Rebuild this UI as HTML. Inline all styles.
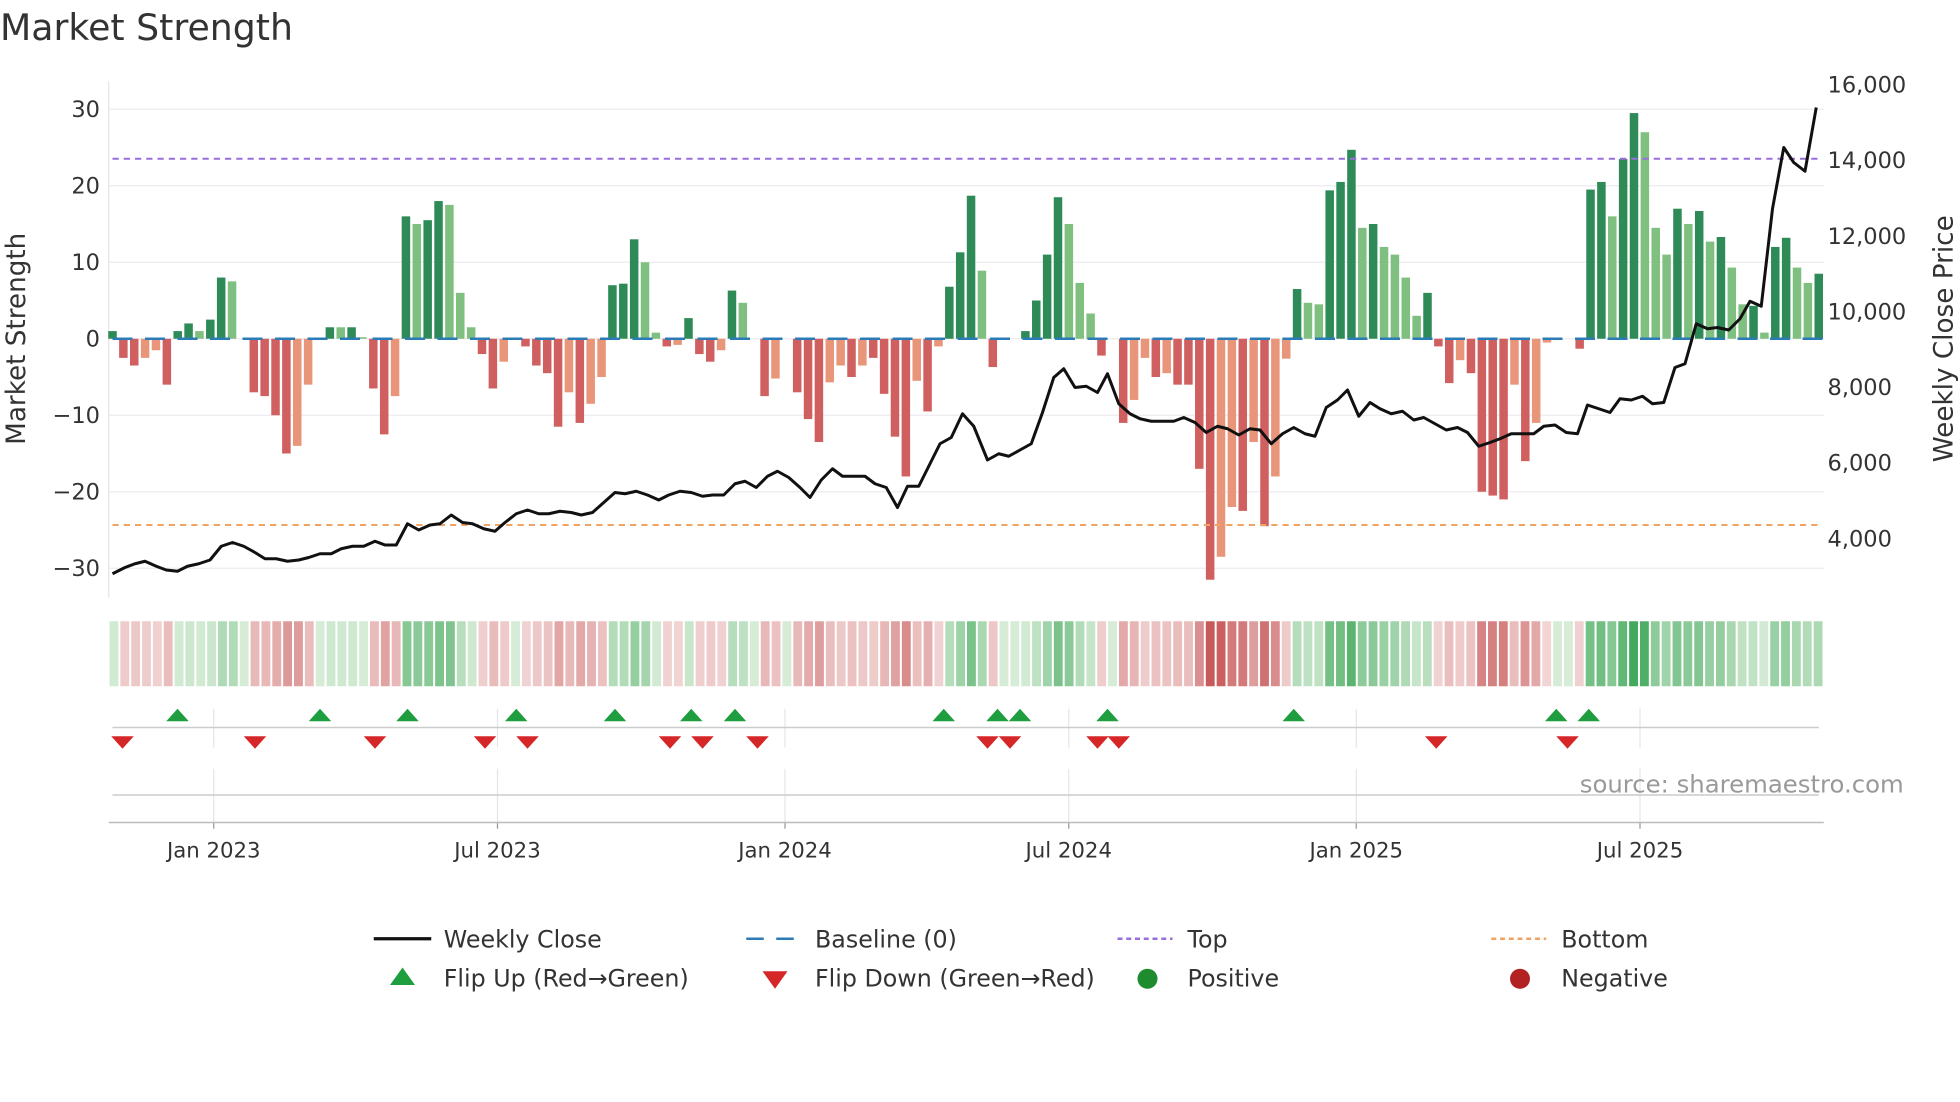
<!DOCTYPE html>
<html><head><meta charset="utf-8"><style>
html,body{margin:0;padding:0;background:#fff;}
svg{display:block;}
text{font-family:"DejaVu Sans","Liberation Sans",sans-serif;fill:#333;}
</style></head><body>
<svg id="s" width="1960" height="1102" viewBox="0 0 1568 881.6" xmlns="http://www.w3.org/2000/svg">
<text x="0" y="32" font-size="29">Market Strength</text>
<g id="grid"></g>
<g id="bars"></g>
<g id="heat"></g>
<g id="rest"></g>
</svg>
<script>
const NS="http://www.w3.org/2000/svg";
function el(p,t,a,txt){const e=document.createElementNS(NS,t);for(const k in a)e.setAttribute(k,a[k]);if(txt!==undefined)e.textContent=txt;document.getElementById(p).appendChild(e);return e;}
const zeroY=271, unit=6.12;
const vy=v=>zeroY-v*unit;
for(let v=-30;v<=30;v+=10){el('grid','line',{x1:87,x2:1459,y1:vy(v),y2:vy(v),stroke:'#ececf0','stroke-width':1});
 el('grid','text',{x:80,y:vy(v)+6,'font-size':18,'text-anchor':'end'},(v<0?'\u2212':'')+Math.abs(v));}
el('grid','line',{x1:87,x2:87,y1:65,y2:478,stroke:'#e4e4e8'});
const pr=[16000,14000,12000,10000,8000,6000,4000];
pr.forEach(p=>{const y=68+(16000-p)/2000*60.5;el('grid','text',{x:1462,y:y+6,'font-size':18},p.toLocaleString('en-US'));});
el('grid','text',{x:0,y:0,'font-size':21,'text-anchor':'middle',transform:'translate(20,271) rotate(-90)'},'Market Strength');
el('grid','text',{x:0,y:0,'font-size':21,'text-anchor':'middle',transform:'translate(1562,271) rotate(-90)'},'Weekly Close Price');
const B="1d -2.5r -3.5r -2.5o -1.5o -6r 1d 2d 1l 2.5d 8d 7.5l 0 -7r -7.5r -10r -15r -14o -6o 0 1.5d 1.5l 1.5d 0.2l -6.5r -12.5r -7.5o 16d 15l 15.5d 18d 17.5l 6l 1.5l -2r -6.5r -3o 0 -1r -3.5r -4.5r -11.5r -7o -11r -8.5o -5o 7d 7.2d 13d 10l 0.8l -1r -0.8o 2.7d -2r -3r -1.5o 6.3d 4.7l 0 -7.5r -5.2o 0 -7r -10.5r -13.5r -5.7o -3.5o -5r -3.5o -2.5r -7.2r -12.8r -18r -5.5o -9.5r -1o 6.8d 11.3d 18.7d 8.9l -3.7r 0 0 1d 5d 11d 18.5d 15l 7.3l 3.3l -2.2r 0 -11r -8o -2.5o -5r -4.5o -6r -6r -17r -31.5r -28.5o -22o -22.5r -13.5o -24.5r -18o -2.6o 6.5d 4.7l 4.5l 19.4d 20.5d 24.7d 14.5l 15d 12l 11l 8l 3l 6d -1r -5.8r -2.8o -4.5r -20r -20.5r -21r -6o -16r -11o -0.5o 0 0 -1.3r 19.5d 20.5d 16l 23.5d 29.5d 27l 14.5l 11l 17d 15l 16.7d 12.7l 13.3d 9.3l 4.5l 4.3d 0.8l 12d 13.2d 9.3l 7.3l 8.5d".split(' ');
const n=B.length, x0=90, x1=1455, pitch=(x1-x0)/(n-1);
const col={d:'#2e8b57',l:'#7fbf7f',r:'#d05f5f',o:'#e8957a'};
const vals=[];
B.forEach((s,i)=>{const v=parseFloat(s);const t=s.replace(/[-0-9.]/g,'');vals.push(v);
 const x=x0+i*pitch;if(v!==0&&t){const y=Math.min(vy(v),zeroY),h=Math.abs(v*unit);el('bars','rect',{x:x-3.4,y:y,width:6.8,height:h,fill:col[t]});}});
el('bars','line',{x1:90,x2:1458,y1:zeroY,y2:zeroY,stroke:'#2b7bb9','stroke-width':2,'stroke-dasharray':'16 10'});
el('bars','line',{x1:90,x2:1458,y1:127,y2:127,stroke:'#9a6fdc','stroke-width':1.6,'stroke-dasharray':'5 4'});
el('bars','line',{x1:90,x2:1458,y1:420,y2:420,stroke:'#f0a463','stroke-width':1.6,'stroke-dasharray':'5 4'});
const P=[[90,459],[100,454],[108,451],[116,449],[125,453],[133,456],[142,457],[150,453],[159,451],[168,448],[177,437],[186,434],[195,437],[204,442],[212,447],[221,447],[230,449],[239,448],[247,446],[256,443],[265,443],[273,439],[282,437],[291,437],[300,433],[308,436],[317,436],[326,419],[335,424],[344,420],[352,419],[361,412],[370,418],[378,419],[387,423],[396,425],[404,418],[413,411],[422,408],[431,411],[439,411],[448,409],[457,410],[465,412],[474,410],[483,402],[492,394],[500,395],[509,393],[518,396],[527,400],[535,396],[544,393],[553,394],[562,397],[570,396],[579,396],[588,387],[596,385],[605,390],[614,381],[622,377],[631,382],[640,390],[648,398],[657,384],[666,375],[674,381],[683,381],[692,381],[700,387],[709,390],[718,406],[726,389],[735,389],[744,371],[752,355],[761,350],[770,331],[779,341],[790,368],[799,363],[807,365],[816,360],[825,355],[834,330],[843,302],[851,295],[860,310],[869,309],[878,314],[886,299],[895,323],[904,331],[912,335],[921,337],[930,337],[939,337],[947,334],[956,338],[965,346],[974,341],[982,343],[991,348],[1000,343],[1008,344],[1017,355],[1026,347],[1035,342],[1044,347],[1052,349],[1061,326],[1070,320],[1078,312],[1087,333],[1096,322],[1104,327],[1113,331],[1122,329],[1131,336],[1139,334],[1148,339],[1157,344],[1166,342],[1174,346],[1183,357],[1192,354],[1200,351],[1209,347],[1218,347],[1227,347],[1235,341],[1244,340],[1253,346],[1262,347],[1270,324],[1279,327],[1288,330],[1296,319],[1305,320],[1314,317],[1322,323],[1331,322],[1340,294],[1348,291],[1357,259],[1366,263],[1374,262],[1383,264],[1392,255],[1400,241],[1409,245],[1418,167],[1427,118],[1435,130],[1444,137],[1453,86]];
el('bars','polyline',{points:P.map(p=>p.join(',')).join(' '),fill:'none',stroke:'#111','stroke-width':2.4,'stroke-linejoin':'round'});
function mix(a,b,t){return 'rgb('+a.map((c,i)=>Math.round(c+(b[i]-c)*t)).join(',')+')';}
const hw=(1459-87)/n;
vals.forEach((v,i)=>{let c;
 if(v>=0){c=mix([214,236,214],[64,168,90],Math.min(1,v/30));}
 else{c=mix([242,214,214],[200,90,90],Math.min(1,-v/30));}
 el('heat','rect',{x:87+i*hw+0.6,y:497,width:hw-1.6,height:52,fill:c});});
const up=[142,256,326,413,492,553,588,755,798,816,886,1035,1245,1271];
const dn=[98,204,300,388,422,536,562,606,790,808,878,895,1149,1254];
const dates=[[171,'Jan 2023'],[398,'Jul 2023'],[628,'Jan 2024'],[855,'Jul 2024'],[1085,'Jan 2025'],[1312,'Jul 2025']];
dates.forEach(d=>{el('rest','line',{x1:d[0],x2:d[0],y1:567,y2:598,stroke:'#e6e6ea'});el('rest','line',{x1:d[0],x2:d[0],y1:615,y2:658,stroke:'#e6e6ea'});
 el('rest','line',{x1:d[0],x2:d[0],y1:658,y2:663,stroke:'#999'});
 el('rest','text',{x:d[0],y:686,'font-size':17,'text-anchor':'middle'},d[1]);});
el('rest','line',{x1:90,x2:1455,y1:582,y2:582,stroke:'#ccc','stroke-width':1.2});
el('rest','line',{x1:90,x2:1455,y1:636,y2:636,stroke:'#ccc','stroke-width':1.2});
el('rest','line',{x1:87,x2:1459,y1:658,y2:658,stroke:'#bbb','stroke-width':1.2});
up.forEach(x=>el('rest','path',{d:`M${x-9},577 L${x+9},577 L${x},567 Z`,fill:'#1e9e3e'}));
dn.forEach(x=>el('rest','path',{d:`M${x-9},589 L${x+9},589 L${x},599 Z`,fill:'#d62728'}));
el('rest','text',{x:1523,y:634,'font-size':19.5,'text-anchor':'end',style:'fill:#999'},'source: sharemaestro.com');
el('rest','line',{x1:299,x2:345,y1:751,y2:751,stroke:'#111','stroke-width':2.6});
el('rest','line',{x1:597,x2:641,y1:751,y2:751,stroke:'#2b7bb9','stroke-width':2,'stroke-dasharray':'14 10'});
el('rest','line',{x1:894,x2:938,y1:751,y2:751,stroke:'#9a6fdc','stroke-width':2,'stroke-dasharray':'4 3'});
el('rest','line',{x1:1193,x2:1237,y1:751,y2:751,stroke:'#f0a463','stroke-width':2,'stroke-dasharray':'4 3'});
el('rest','path',{d:'M312,788 L332,788 L322,774 Z',fill:'#1e9e3e'});
el('rest','path',{d:'M610,777 L630,777 L620,791 Z',fill:'#d62728'});
el('rest','circle',{cx:918,cy:783,r:8,fill:'#1e8c2e'});
el('rest','circle',{cx:1216,cy:783,r:8,fill:'#b22222'});
[[355,758,'Weekly Close'],[652,758,'Baseline (0)'],[950,758,'Top'],[1249,758,'Bottom'],[355,789,'Flip Up (Red\u2192Green)'],[652,789,'Flip Down (Green\u2192Red)'],[950,789,'Positive'],[1249,789,'Negative']].forEach(t=>el('rest','text',{x:t[0],y:t[1],'font-size':19},t[2]));
</script>
</body></html>
